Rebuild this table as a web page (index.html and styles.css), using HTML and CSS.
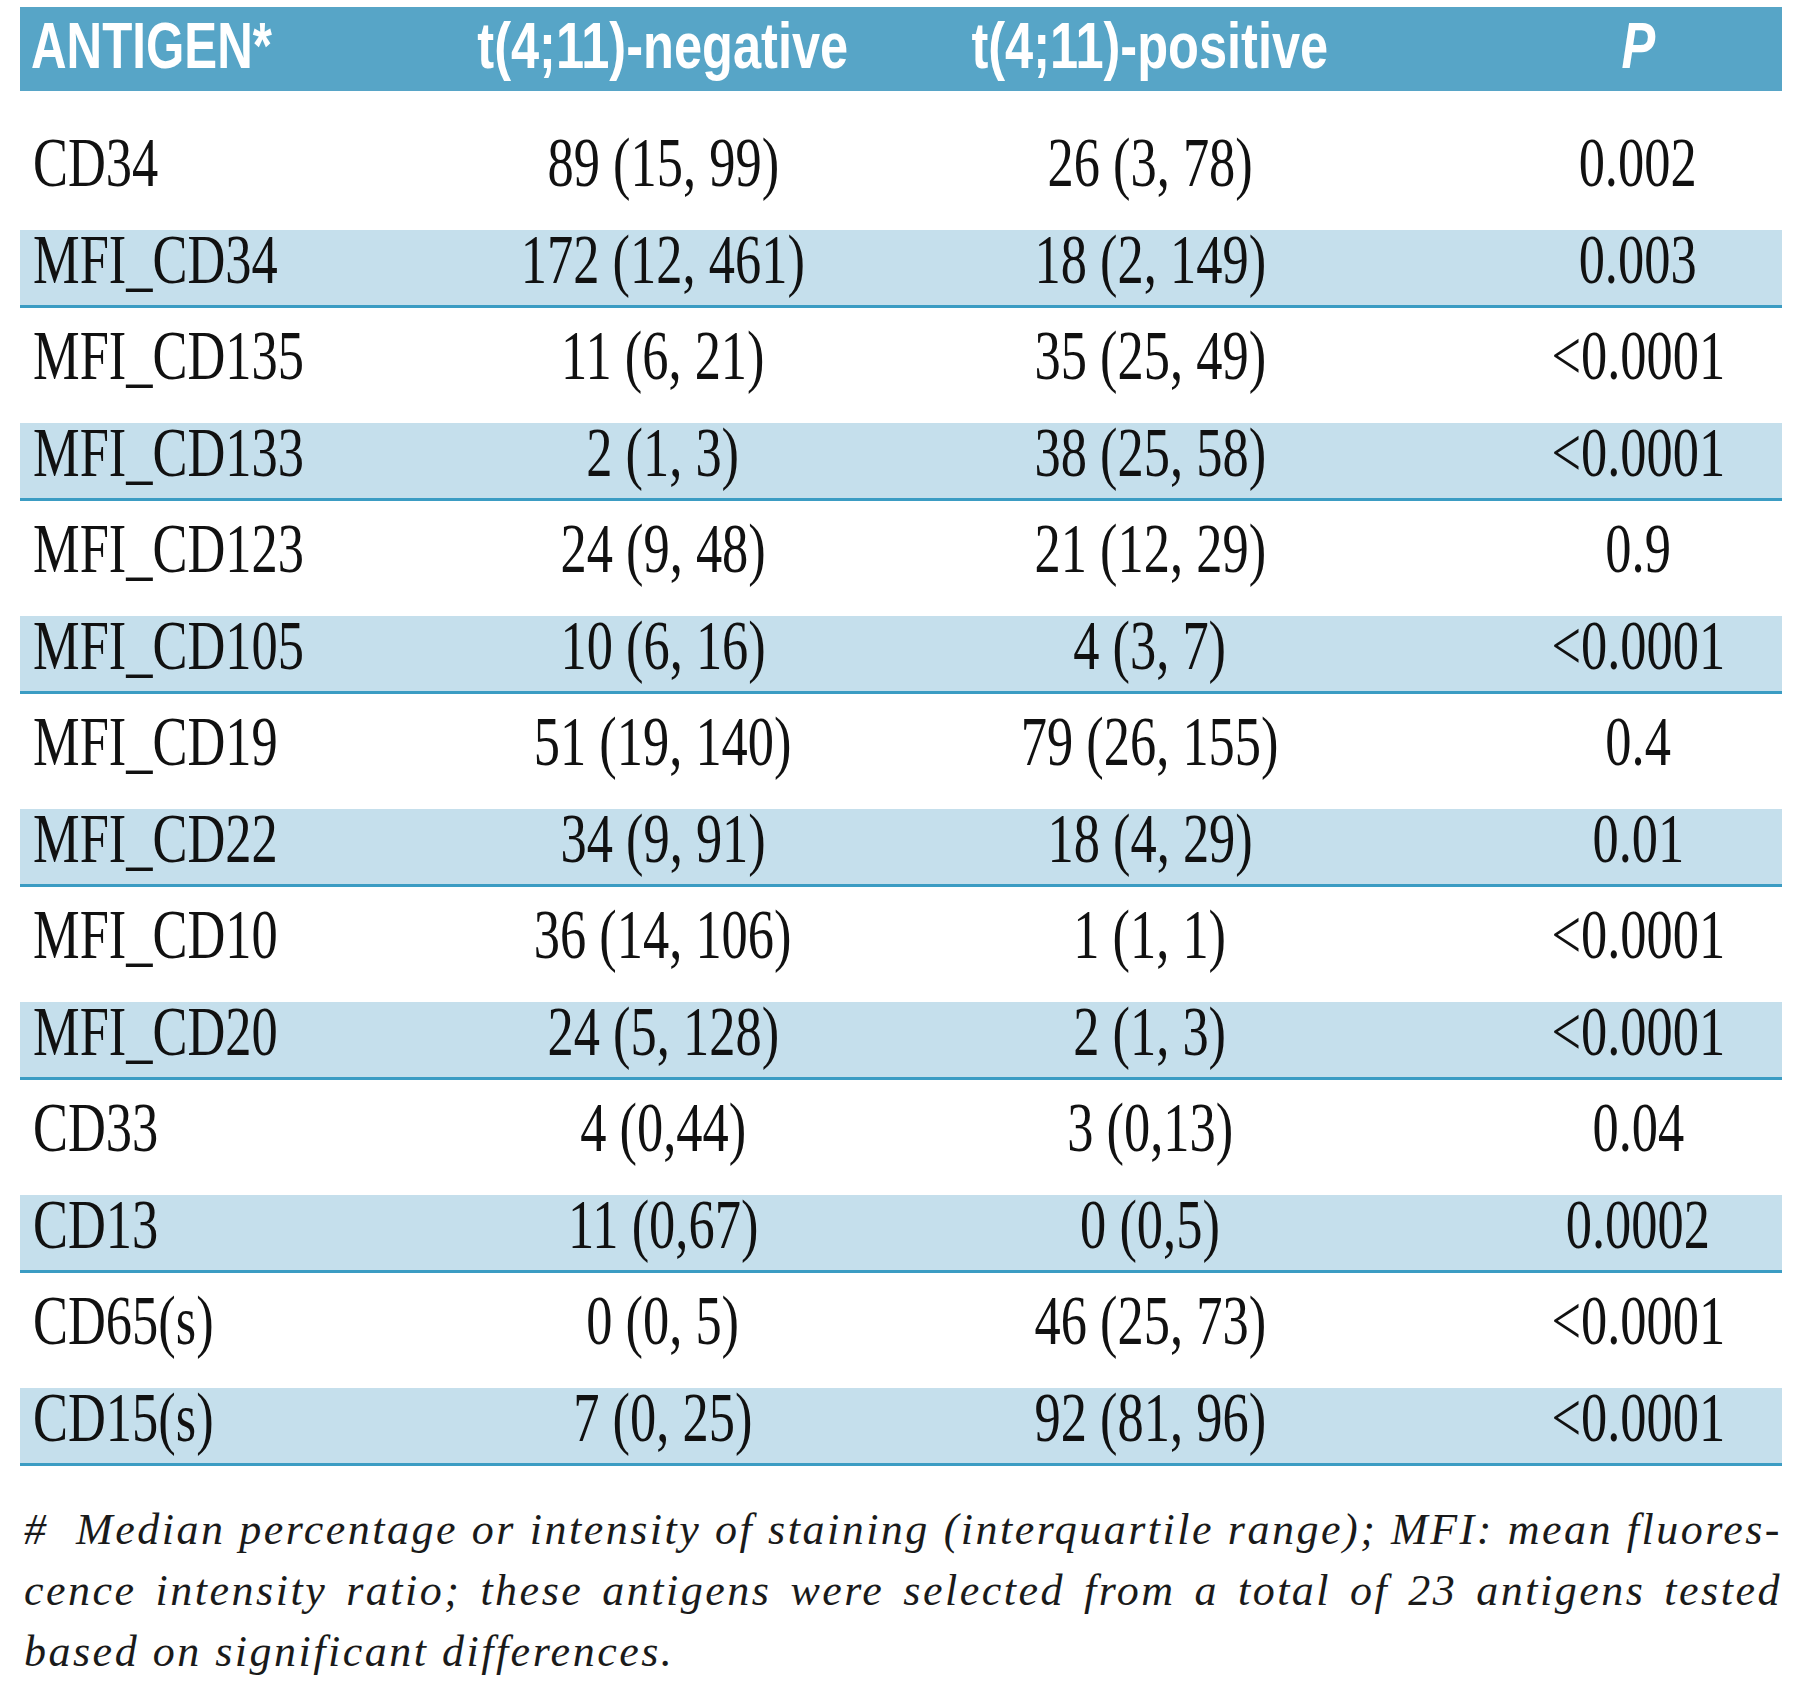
FILE: index.html
```html
<!DOCTYPE html>
<html lang="en">
<head>
<meta charset="utf-8">
<title>Antigen expression table</title>
<link rel="stylesheet" href="styles.css">
</head>
<body>
<div class="page">
  <div class="tbl">
    <div class="head">
      <div class="cell c1"><span class="sq">ANTIGEN*</span></div>
      <div class="cell c2"><span class="sq">t(4;11)-negative</span></div>
      <div class="cell c3"><span class="sq">t(4;11)-positive</span></div>
      <div class="cell c4"><span class="sq pi">P</span></div>
    </div>
    <div class="rows">
      <div class="row"><div class="cell c1"><span class="sq">CD34</span></div><div class="cell c2"><span class="sq">89 (15, 99)</span></div><div class="cell c3"><span class="sq">26 (3, 78)</span></div><div class="cell c4"><span class="sq">0.002</span></div></div>
      <div class="row alt"><div class="cell c1"><span class="sq">MFI_CD34</span></div><div class="cell c2"><span class="sq">172 (12, 461)</span></div><div class="cell c3"><span class="sq">18 (2, 149)</span></div><div class="cell c4"><span class="sq">0.003</span></div></div>
      <div class="row"><div class="cell c1"><span class="sq">MFI_CD135</span></div><div class="cell c2"><span class="sq">11 (6, 21)</span></div><div class="cell c3"><span class="sq">35 (25, 49)</span></div><div class="cell c4"><span class="sq">&lt;0.0001</span></div></div>
      <div class="row alt"><div class="cell c1"><span class="sq">MFI_CD133</span></div><div class="cell c2"><span class="sq">2 (1, 3)</span></div><div class="cell c3"><span class="sq">38 (25, 58)</span></div><div class="cell c4"><span class="sq">&lt;0.0001</span></div></div>
      <div class="row"><div class="cell c1"><span class="sq">MFI_CD123</span></div><div class="cell c2"><span class="sq">24 (9, 48)</span></div><div class="cell c3"><span class="sq">21 (12, 29)</span></div><div class="cell c4"><span class="sq">0.9</span></div></div>
      <div class="row alt"><div class="cell c1"><span class="sq">MFI_CD105</span></div><div class="cell c2"><span class="sq">10 (6, 16)</span></div><div class="cell c3"><span class="sq">4 (3, 7)</span></div><div class="cell c4"><span class="sq">&lt;0.0001</span></div></div>
      <div class="row"><div class="cell c1"><span class="sq">MFI_CD19</span></div><div class="cell c2"><span class="sq">51 (19, 140)</span></div><div class="cell c3"><span class="sq">79 (26, 155)</span></div><div class="cell c4"><span class="sq">0.4</span></div></div>
      <div class="row alt"><div class="cell c1"><span class="sq">MFI_CD22</span></div><div class="cell c2"><span class="sq">34 (9, 91)</span></div><div class="cell c3"><span class="sq">18 (4, 29)</span></div><div class="cell c4"><span class="sq">0.01</span></div></div>
      <div class="row"><div class="cell c1"><span class="sq">MFI_CD10</span></div><div class="cell c2"><span class="sq">36 (14, 106)</span></div><div class="cell c3"><span class="sq">1 (1, 1)</span></div><div class="cell c4"><span class="sq">&lt;0.0001</span></div></div>
      <div class="row alt"><div class="cell c1"><span class="sq">MFI_CD20</span></div><div class="cell c2"><span class="sq">24 (5, 128)</span></div><div class="cell c3"><span class="sq">2 (1, 3)</span></div><div class="cell c4"><span class="sq">&lt;0.0001</span></div></div>
      <div class="row"><div class="cell c1"><span class="sq">CD33</span></div><div class="cell c2"><span class="sq">4 (0,44)</span></div><div class="cell c3"><span class="sq">3 (0,13)</span></div><div class="cell c4"><span class="sq">0.04</span></div></div>
      <div class="row alt"><div class="cell c1"><span class="sq">CD13</span></div><div class="cell c2"><span class="sq">11 (0,67)</span></div><div class="cell c3"><span class="sq">0 (0,5)</span></div><div class="cell c4"><span class="sq">0.0002</span></div></div>
      <div class="row"><div class="cell c1"><span class="sq">CD65(s)</span></div><div class="cell c2"><span class="sq">0 (0, 5)</span></div><div class="cell c3"><span class="sq">46 (25, 73)</span></div><div class="cell c4"><span class="sq">&lt;0.0001</span></div></div>
      <div class="row alt"><div class="cell c1"><span class="sq">CD15(s)</span></div><div class="cell c2"><span class="sq">7 (0, 25)</span></div><div class="cell c3"><span class="sq">92 (81, 96)</span></div><div class="cell c4"><span class="sq">&lt;0.0001</span></div></div>
    </div>
  </div>
  <div class="note">
    <span class="line just">#&nbsp; Median percentage or intensity of staining (interquartile range); MFI: mean fluores-</span>
    <span class="line just">cence intensity ratio; these antigens were selected from a total of 23 antigens tested</span>
    <span class="line">based on significant differences.</span>
  </div>
</div>
</body>
</html>
```

FILE: styles.css
```css
html, body {
  margin: 0;
  padding: 0;
  background: #ffffff;
}

.page {
  padding: 7px 18px 0 20px;
}

.tbl {
  width: 1762px;
}

.head,
.row {
  display: grid;
  grid-template-columns: 400px 486px 488px 388px;
}

.head {
  height: 84px;
  background: #57a5c7;
  color: #ffffff;
  font-family: "Liberation Sans", Arial, sans-serif;
  font-weight: 700;
  font-size: 64px;
  line-height: 78px;
  margin-bottom: 33px;
}

.head .cell.c1 {
  padding-left: 11px;
}

.head .sq {
  transform: scaleX(0.79);
}

.head .c1 .sq {
  transform: scaleX(0.77);
}

.head .pi {
  font-style: italic;
}

.cell {
  white-space: nowrap;
  text-align: center;
}

.cell.c1 {
  text-align: left;
  padding-left: 13px;
}

.cell.c4 {
  padding-left: 100px;
}

.sq {
  display: inline-block;
  transform: scaleX(0.76);
  transform-origin: 50% 50%;
}

.c1 .sq {
  transform-origin: 0 50%;
}

.rows {
  display: flex;
  flex-direction: column;
}

.row {
  height: 96.5px;
  font-family: "Liberation Serif", "Times New Roman", serif;
  font-size: 69px;
  line-height: 78px;
  color: #111111;
}

.row.alt {
  box-sizing: border-box;
  height: 78px;
  margin: 9.25px 0;
  background: #c5dfec;
  border-bottom: 3px solid #3b9cc3;
  line-height: 60px;
}

.note {
  margin-top: 24px;
  width: 1758px;
  padding-left: 4px;
  font-family: "Liberation Serif", "Times New Roman", serif;
  font-style: italic;
  font-size: 44px;
  line-height: 61px;
  letter-spacing: 2.5px;
  color: #1a1a1a;
}

.line {
  display: block;
  white-space: nowrap;
}

.line.just {
  white-space: normal;
  text-align: justify;
  text-align-last: justify;
}
```
